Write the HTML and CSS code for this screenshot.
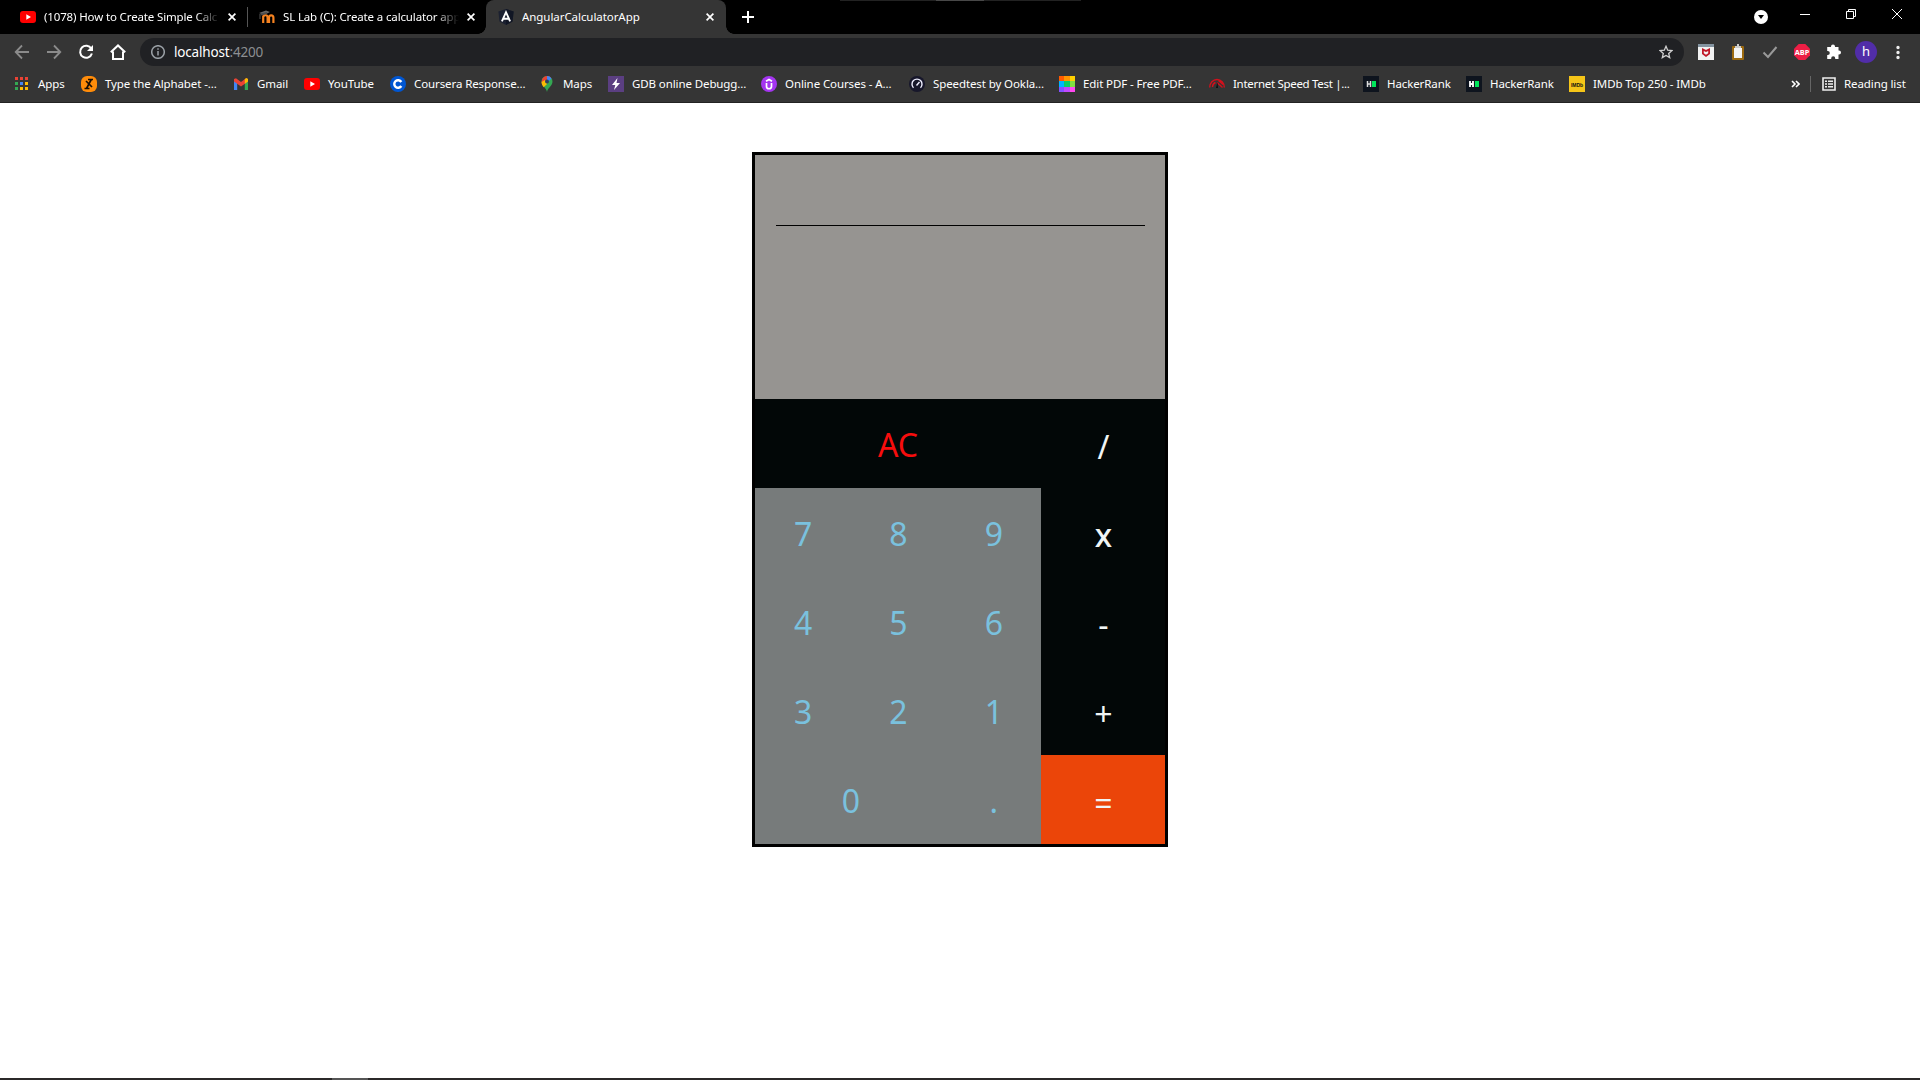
FILE: index.html
```html
<!DOCTYPE html>
<html lang="en">
<head>
<meta charset="utf-8">
<title>AngularCalculatorApp</title>
<link rel="stylesheet" href="styles.css">
</head>
<body>
<header class="browser">
  <div class="tabstrip">
    <div class="tab">
      <svg class="ico" viewBox="0 0 16 16"><rect y="2" width="16" height="12" rx="3" fill="#f00"/><path d="M6.3 5.2v5.6L11 8z" fill="#fff"/></svg>
      <span class="tab-title fade">(1078) How to Create Simple Calc</span>
      <svg class="x" viewBox="0 0 8 8"><path d="M.6.6l6.8 6.8M7.4.6L.6 7.4"/></svg>
    </div>
    <i class="tab-sep"></i>
    <div class="tab second">
      <svg class="ico" viewBox="0 0 16 16"><path d="M0 4l7-2.4L11 3 5 6z" fill="#666"/><path d="M1 5v5" stroke="#555"/><path d="M4.2 14V6.5M4.2 8C5 5.6 8.6 5.6 8.6 8.6V14M10 14V8.4C10 5.6 14.4 5.6 14.4 8.6V14" fill="none" stroke="#f58220" stroke-width="2.2"/><path d="M2 5.5l6-1.6" stroke="#4b4b4b" stroke-width="2"/></svg>
      <span class="tab-title fade">SL Lab (C): Create a calculator app</span>
      <svg class="x" viewBox="0 0 8 8"><path d="M.6.6l6.8 6.8M7.4.6L.6 7.4"/></svg>
    </div>
    <div class="tab active">
      <svg class="ico" viewBox="0 0 16 16"><path d="M8 0l7.600 2.600-1.100 9.800L8 16l-6.500-3.600L.4 2.600z" fill="#1b2030"/><path d="M8 0l7.600 2.600-1.100 9.800L8 16z" fill="#111624"/><path d="M3.900 12.300L8 3.200l4.100 9.100M5.500 9.700h5" fill="none" stroke="#fff" stroke-width="1.900"/></svg>
      <span class="tab-title angular">AngularCalculatorApp</span>
      <svg class="x" viewBox="0 0 8 8"><path d="M.6.6l6.800 6.800M7.400.6L.6 7.400"/></svg>
    </div>
    <svg class="plus" viewBox="0 0 12 12"><path d="M6 0v12M0 6h12" stroke="#fff" stroke-width="2"/></svg>
    <div class="window-edge"><i></i></div>
    <svg class="tab-search" viewBox="0 0 14 14"><circle cx="7" cy="7" r="7" fill="#fff"/><path d="M4 5h6L7 9z" fill="#000"/></svg>
    <svg class="win" viewBox="0 0 10 10"><path d="M0 5.500h10"/></svg>
    <svg class="win" viewBox="0 0 10 10"><path d="M.5 2.500h7v7h-7zM2.500 2.500v-2h7v7h-2"/></svg>
    <svg class="win" viewBox="0 0 10 10"><path d="M0 0l10 10M10 0L0 10"/></svg>
  </div>

  <div class="toolbar">
    <div class="nav">
      <svg class="ico dim" viewBox="0 0 16 16"><path d="M15 8H2M8 1.500L1.700 8 8 14.500"/></svg>
      <svg class="ico dim" viewBox="0 0 16 16"><path d="M1 8h13M8 1.500L14.300 8 8 14.500"/></svg>
      <svg class="ico lit" viewBox="0 0 16 16"><path d="M13.300 4.700A6 6 0 1 0 13.900 9.500"/><path d="M15 1v6H9z" fill="#fff" stroke="none"/></svg>
      <svg class="ico lit" viewBox="0 0 16 16"><path d="M.8 8.300L8 1.500l7.200 6.800M3 7.500V15h10V7.500"/></svg>
    </div>
    <div class="omnibox">
      <svg class="info" viewBox="0 0 14 14"><circle cx="7" cy="7" r="6.300"/><path d="M7 6v4.500M7 3.300v1.500"/></svg>
      <span class="url">localhost<b>:4200</b></span>
      <svg class="star" viewBox="0 0 14 14"><path d="M7 1.300l1.700 3.900 4.200.4-3.200 2.800 1 4.200L7 10.400l-3.700 2.200 1-4.200L1.100 5.600l4.200-.4z"/></svg>
    </div>
    <div class="extensions">
      <svg class="ico" viewBox="0 0 16 16"><path d="M0 0h16v16H0z" fill="#f2f2f2"/><path d="M0 0h16v3H0z" fill="#8494a0"/><path d="M4 4l4 2 4-2v6l-4 3-4-3zM5.800 7v2.200L8 10.700l2.200-1.500V7L8 8z" fill="#c01828" fill-rule="evenodd"/></svg>
      <svg class="ico" viewBox="0 0 16 16"><rect x="2" y="2" width="12" height="14" rx="1" fill="#9c6a10"/><path d="M4 4h8v10H4z" fill="#f4f4f4"/><path d="M5 4V2h2V0h2v2h2v2z" fill="#ccc"/></svg>
      <svg class="ico" viewBox="0 0 16 16"><path d="M1.500 8.500L6 13l8.500-10" fill="none" stroke="#999" stroke-width="2"/></svg>
      <svg class="ico" viewBox="0 0 16 16"><path d="M4.700 0h6.600L16 4.700v6.600L11.300 16H4.700L0 11.300V4.700z" fill="#ed1e45"/><text x="8" y="10.800" class="abp" textLength="14.600" lengthAdjust="spacingAndGlyphs">ABP</text></svg>
      <svg class="ico" viewBox="0 0 16 16"><path d="M5 3V2.500a2 2 0 0 1 4 0V3h3.500v3.500h.5a2 2 0 0 1 0 4h-.5V15H9.200v-.7a2 2 0 0 0-4 0v.7H1.200v-4h.6a2 2 0 0 0 0-4h-.6V3z" fill="#fff"/></svg>
      <span class="avatar">h</span>
      <svg class="ico" viewBox="0 0 16 16"><path d="M8 3.500v.01M8 8.500v.01M8 13.500v.01" stroke="#eee" stroke-width="3.400" stroke-linecap="round"/></svg>
    </div>
  </div>

  <nav class="bookmarks">
    <a><svg class="ico" viewBox="0 0 16 16" shape-rendering="crispEdges"><path d="M1 1h3v3H1zM6 1h3v3H6zM11 1h3v3h-3z" fill="#ea4335"/><path d="M1 6h3v3H1zM1 11h3v3H1z" fill="#34a853"/><path d="M6 6h3v3H6z" fill="#4285f4"/><path d="M11 6h3v3h-3zM6 11h3v3H6zM11 11h3v3h-3z" fill="#fbbc05"/></svg><span>Apps</span></a>
    <a><svg class="ico" viewBox="0 0 16 16"><rect width="16" height="16" rx="6" fill="#ff8c0a"/><path d="M7 3.500h5M3.500 12.500h5M10.300 3.500L5.500 12.500M5 5l6 6" stroke="#1b1005" stroke-width="1.700"/></svg><span>Type the Alphabet -...</span></a>
    <a><svg class="ico" viewBox="0 0 16 16"><path d="M1 4v10h3.200V7z" fill="#4285f4"/><path d="M15 4v10h-3.200V7z" fill="#34a853"/><path d="M1 3l2-.8L8 6l5-3.800 2 .8v2.500L8 10.500 1 5.500z" fill="#ea4335"/><path d="M11.800 3l1.700-1 1.500 1v2.500l-3.200 2.300z" fill="#fbbc04"/></svg><span>Gmail</span></a>
    <a><svg class="ico" viewBox="0 0 16 16"><rect y="2" width="16" height="12" rx="3" fill="#f00"/><path d="M6.300 5.200v5.600L11 8z" fill="#fff"/></svg><span>YouTube</span></a>
    <a><svg class="ico" viewBox="0 0 16 16"><circle cx="8" cy="8" r="8" fill="#0056d2"/><path d="M11.300 6A3.800 3.800 0 1 0 11.300 10" fill="none" stroke="#fff" stroke-width="2.400"/></svg><span>Coursera Response...</span></a>
    <a><svg class="ico" viewBox="0 0 16 16"><path d="M8 16C7.500 12 2.500 10 2.500 5.500a5.500 5.500 0 0 1 11 0C13.500 10 8.500 12 8 16z" fill="#34a853"/><path d="M4 9L12 1.700A5.500 5.500 0 0 0 3.500 2.500L2.500 6z" fill="#ea4335"/><path d="M8 .1a5.500 5.500 0 0 1 4.500 2.400L8 7z" fill="#4285f4"/><path d="M2.600 6L6 4l2 4-3.300 3.200C3.300 9.500 2.500 8 2.600 6z" fill="#fbbc04"/><circle cx="8" cy="5.500" r="2" fill="#303f60"/></svg><span>Maps</span></a>
    <a><svg class="ico" viewBox="0 0 16 16"><path d="M0 0h16v16H0z" fill="#5b3f82"/><path d="M9.500 2L4 9h3.300L6 14l6-7H8.500z" fill="#fff"/></svg><span>GDB online Debugg...</span></a>
    <a><svg class="ico" viewBox="0 0 16 16"><circle cx="8" cy="8" r="8" fill="#a435f0"/><path d="M5.500 7v3.500c0 3 5 3 5 0V7M5 5.200l3-1.700 3 1.700" fill="none" stroke="#fff" stroke-width="1.700"/></svg><span>Online Courses - A...</span></a>
    <a><svg class="ico" viewBox="0 0 16 16"><circle cx="8" cy="8" r="8" fill="#17172b"/><path d="M4.500 11.700a5 5 0 1 1 7 0M7.500 9.500L10.500 6" fill="none" stroke="#eef" stroke-width="1.400"/></svg><span>Speedtest by Ookla...</span></a>
    <a><svg class="ico" viewBox="0 0 16 16" shape-rendering="crispEdges"><path d="M0 0h5v5H0z" fill="#ff5a00"/><path d="M5 0h6v5H5z" fill="#ff9500"/><path d="M11 0h5v5h-5z" fill="#ffd000"/><path d="M0 5h5v6H0z" fill="#00b4ff"/><path d="M5 5h6v6H5z" fill="#08cf68"/><path d="M11 5h5v6h-5z" fill="#80e040"/><path d="M0 11h5v5H0z" fill="#8450ff"/><path d="M5 11h6v5H5z" fill="#c048ff"/><path d="M11 11h5v5h-5z" fill="#ff48f0"/></svg><span>Edit PDF - Free PDF...</span></a>
    <a><svg class="ico" viewBox="0 0 16 16"><path d="M.7 11.500a7.300 8 0 0 1 14.600 0M3.500 11a4.700 5 0 0 1 3-4.500M8 6.500l5.500 5M9.500 4.500l4.500 4" fill="none" stroke="#d4101c" stroke-width="1.400"/><path d="M7 12l1.500-6L9 12z" fill="#111"/></svg><span class="tight">Internet Speed Test |...</span></a>
    <a><svg class="ico" viewBox="0 0 16 16"><path d="M0 0h16v16H0z" fill="#0e141e"/><path d="M4.500 5v6M7.500 5v6M4.500 8h3" stroke="#ddd" stroke-width="1.500"/><path d="M9 5h4v6H9z" fill="#00e65b"/></svg><span>HackerRank</span></a>
    <a><svg class="ico" viewBox="0 0 16 16"><path d="M0 0h16v16H0z" fill="#0e141e"/><path d="M4 5v6M7 5v6M4 8h3" stroke="#fff" stroke-width="1.800"/><path d="M9 5h4v6H9z" fill="#00e65b"/></svg><span>HackerRank</span></a>
    <a><svg class="ico" viewBox="0 0 16 16"><path d="M0 0h16v16H0z" fill="#f5c518"/><text x="8" y="10.500" class="imdb" textLength="12" lengthAdjust="spacingAndGlyphs">IMDb</text></svg><span>IMDb Top 250 - IMDb</span></a>
    <svg class="more" viewBox="0 0 9 8"><path d="M1 1l3 3-3 3M5 1l3 3-3 3"/></svg>
    <i class="mark-sep"></i>
    <a class="reading"><svg viewBox="0 0 14 14"><path d="M1 1h12v12H1z" fill="none" stroke="#eee" stroke-width="1.600"/><path d="M3 4.300h2M6 4.300h5M3 7h2M6 7h5M3 9.700h2M6 9.700h5" stroke="#eee" stroke-width="1.500"/></svg><span>Reading list</span></a>
  </nav>
</header>

<main class="page">
  <section class="calculator">
    <div class="display"><div class="entry"></div></div>
    <div class="keys">
      <button class="key clear">AC</button><button class="key op">/</button>
      <button class="key">7</button><button class="key">8</button><button class="key">9</button><button class="key op times">x</button>
      <button class="key">4</button><button class="key">5</button><button class="key">6</button><button class="key op">-</button>
      <button class="key">3</button><button class="key">2</button><button class="key">1</button><button class="key op">+</button>
      <button class="key zero">0</button><button class="key">.</button><button class="key op equals">=</button>
    </div>
  </section>
</main>
<footer class="taskbar"><i></i></footer>
</body>
</html>
```
FILE: styles.css
```css
* { box-sizing: border-box; }
body {
  margin: 0;
  height: 1080px;
  display: flex;
  flex-direction: column;
  overflow: hidden;
  background: #fff;
  font-family: "Noto Sans", "Open Sans", sans-serif;
}
svg { display: block; flex: none; }
.browser { height: 103px; background: #353535; color: #fff; font-size: 11.5px; border-bottom: 1px solid #222; }
.ico { width: 16px; height: 16px; }

.tabstrip { display: flex; align-items: center; height: 34px; background: #000; }
.tab { display: flex; align-items: center; height: 34px; width: 247px; padding-left: 20px; }
.tab.second { width: 238px; padding-left: 11px; }
.tab-title { width: 176px; margin: 0 8px; padding-bottom: 1px; white-space: nowrap; overflow: hidden; letter-spacing: -0.14px; }
.fade { -webkit-mask-image: linear-gradient(90deg, #000 86%, transparent); mask-image: linear-gradient(90deg, #000 86%, transparent); }
.tab-sep { width: 1px; height: 20px; background: #555; }
.tab.active { width: 240px; padding-left: 12px; background: #353535; border-radius: 8px 8px 0 0; position: relative; }
.tab.active::before, .tab.active::after {
  content: ""; position: absolute; bottom: 0; width: 8px; height: 8px;
}
.tab.active::before { left: -8px; background: radial-gradient(circle at 0 0, transparent 7.5px, #353535 8px); }
.tab.active::after { right: -8px; background: radial-gradient(circle at 100% 0, transparent 7.5px, #353535 8px); }
.x { width: 8px; height: 8px; stroke: #fff; stroke-width: 1.7; }
.tab-title.angular { letter-spacing: -0.06px; }
.plus { width: 12px; height: 12px; margin-left: 16px; }
.window-edge { align-self: flex-start; width: 241px; height: 1px; margin-left: 86px; background: #222; }
.window-edge i { display: block; width: 48px; height: 1px; margin-left: 96px; background: #484848; }
.tab-search { width: 14px; height: 14px; margin-left: auto; }
.win { width: 10px; height: 10px; margin: -6px 0 0 36px; fill: none; stroke: #fff; stroke-width: 1; }
.tab-search + .win { margin-left: 32px; }
.win:last-child { margin-right: 18px; }

.toolbar { display: flex; align-items: center; height: 36px; }
.nav { display: flex; gap: 16px; width: 140px; padding-left: 14px; fill: none; stroke-width: 2; }
.dim { stroke: #8b8b8b; stroke-width: 1.8; }
.lit { stroke: #fff; }
.omnibox { display: flex; align-items: center; width: 1544px; height: 28px; padding: 0 11px; border-radius: 14px; background: #202124; }
.info { width: 14px; height: 14px; fill: none; stroke: #9aa0a6; stroke-width: 1.5; }
.url { margin-left: 9px; padding-bottom: 1px; font-size: 13.5px; letter-spacing: -0.17px; }
.url b { font-weight: 400; color: #8d8f92; }
.star { width: 14px; height: 14px; margin-left: auto; fill: none; stroke: #d0d0d0; stroke-width: 1.3; }
.extensions { display: flex; align-items: center; gap: 16px; padding-left: 14px; }
.extensions .avatar { width: 22px; height: 22px; margin: 0 -3px; border-radius: 50%; background: #512da8; text-align: center; line-height: 21px; font-size: 13px; }
.abp { font: bold 7.5px "Open Sans", sans-serif; fill: #fff; text-anchor: middle; }
.imdb { font: bold 6px "Liberation Sans", sans-serif; fill: #111; text-anchor: middle; }

.bookmarks {
  display: grid;
  grid-template-columns: 67px 152px 71px 86px 149px 69px 153px 148px 150px 150px 154px 103px 103px 222px 19px 12px auto;
  align-items: center;
  height: 28px;
  padding-left: 14px;
}
.bookmarks a { display: flex; align-items: center; gap: 8px; white-space: nowrap; letter-spacing: -0.1px; }
.bookmarks span { padding-bottom: 1px; }
.bookmarks .tight { letter-spacing: -0.3px; }
.more { width: 9px; height: 8px; fill: none; stroke: #fff; stroke-width: 1.6; }
.mark-sep { width: 1px; height: 16px; background: #666; }
.reading svg { width: 14px; height: 14px; }

.page { flex: 1; padding-top: 49px; }
.calculator { width: 416px; height: 695px; margin: 0 auto; border: 3px solid #000; background: #020707; }
.display { height: 244px; padding: 0 20px 0 21px; background: #969491; }
.entry { height: 71px; border-bottom: 1px solid #000; }
.keys { display: grid; grid-template-columns: repeat(3, 95.333px) 124px; grid-auto-rows: 89px; }
.key { padding: 2px 0 0 1px; border: 0; background: #777b7b; color: #7ac1de; font: 32px "Noto Sans", sans-serif; }
.clear { grid-column: span 3; padding-left: 0; background: #020707; color: #f70d0d; }
.zero { grid-column: span 2; }
.op { padding-top: 5px; background: #020707; color: #f0f5f5; }
.times { padding-top: 3px; font-weight: 500; }
.equals { background: #eb4509; }

.taskbar { height: 2px; background: #2b2929; }
.taskbar i { display: block; width: 36px; height: 2px; margin-left: 332px; background: #555; }
```
